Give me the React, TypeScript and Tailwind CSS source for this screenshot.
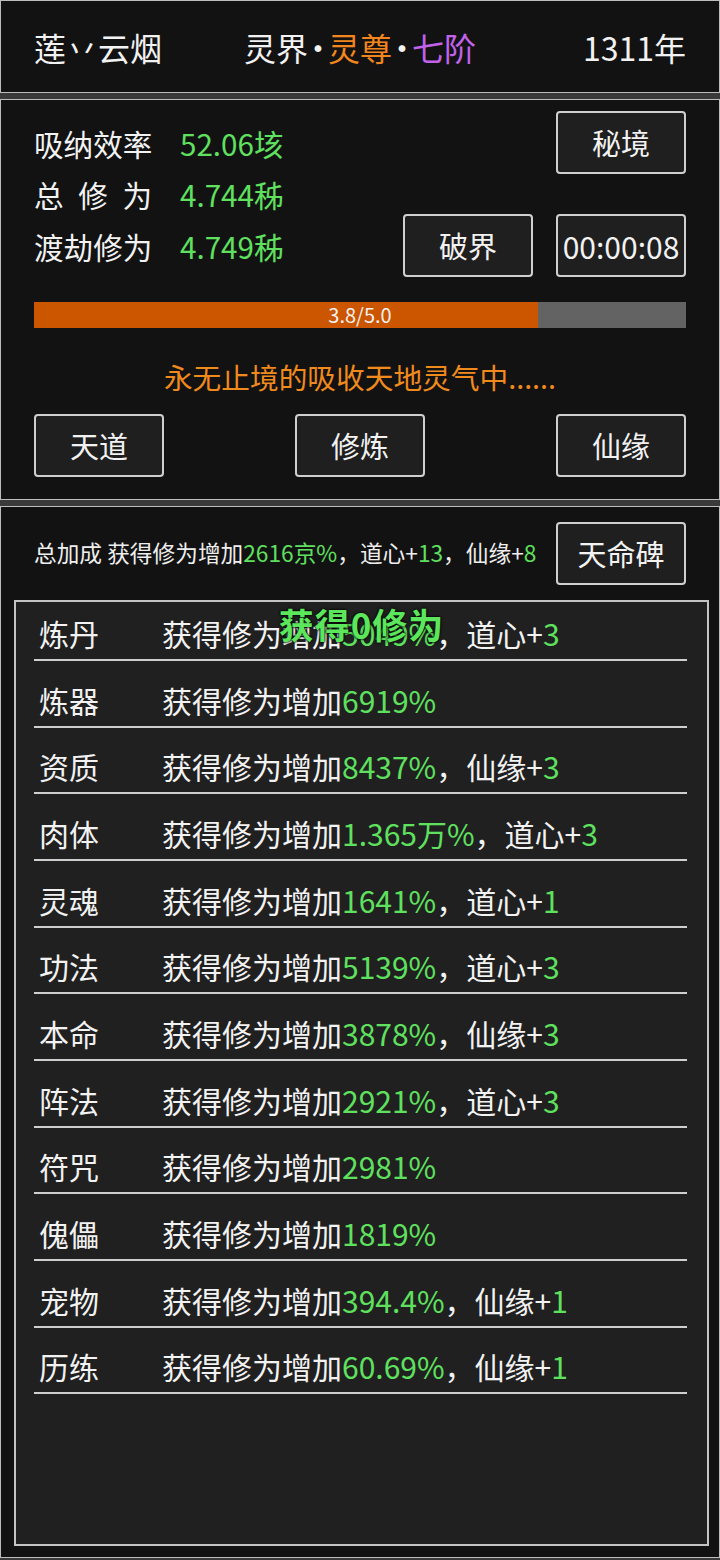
import React from 'react';

// 属性加成列表
interface BonusRow {
    name: string;
    gain: string;
    extraLabel?: string;
    extraValue?: string;
}

const rows: BonusRow[] = [
    { name: '炼丹', gain: '5049%', extraLabel: '道心+', extraValue: '3' },
    { name: '炼器', gain: '6919%' },
    { name: '资质', gain: '8437%', extraLabel: '仙缘+', extraValue: '3' },
    { name: '肉体', gain: '1.365万%', extraLabel: '道心+', extraValue: '3' },
    { name: '灵魂', gain: '1641%', extraLabel: '道心+', extraValue: '1' },
    { name: '功法', gain: '5139%', extraLabel: '道心+', extraValue: '3' },
    { name: '本命', gain: '3878%', extraLabel: '仙缘+', extraValue: '3' },
    { name: '阵法', gain: '2921%', extraLabel: '道心+', extraValue: '3' },
    { name: '符咒', gain: '2981%' },
    { name: '傀儡', gain: '1819%' },
    { name: '宠物', gain: '394.4%', extraLabel: '仙缘+', extraValue: '1' },
    { name: '历练', gain: '60.69%', extraLabel: '仙缘+', extraValue: '1' },
];

const progress = { current: 3.8, max: 5.0 };

const GameButton = ({ children, className = '' }: { children: React.ReactNode; className?: string }) => (
    <button
        className={`flex h-[63px] w-[130px] shrink-0 items-center justify-center rounded-[4px] border-2 border-[#cfcfcf] bg-[#1f1f1f] text-[29px] leading-none text-[#f2f2f2] ${className}`}
    >
        {children}
    </button>
);

const StatRow = ({ label, value }: { label: React.ReactNode; value: string }) => (
    <div className="flex h-[51.5px] items-center">
        <div className="w-[146px] text-[29.6px] text-[#f2f2f2]">{label}</div>
        <div className="text-[29.6px] text-[#5fe05f]">{value}</div>
    </div>
);

const Dot = () => <span className="inline-flex w-[20px] justify-center">·</span>;

export default function App() {
    return (
        <div className="flex h-[1560px] w-[720px] flex-col bg-[#3a3a3a] font-['Noto_Sans_CJK_SC','Noto_Sans',sans-serif]">
            {/* Header */}
            <div className="grid h-[93px] shrink-0 grid-cols-[1fr_auto_1fr] items-center border border-[#bdbdbd] bg-[#121212] px-[33px] text-[32px] text-[#f2f2f2]">
                <span>莲丷云烟</span>
                <span className="flex items-center">
                    灵界<Dot />
                    <span className="text-[#f2861e]">灵尊</span>
                    <Dot />
                    <span className="text-[#c262ea]">七阶</span>
                </span>
                <span className="justify-self-end">1311年</span>
            </div>

            {/* Stats */}
            <div className="mt-[6px] h-[401px] shrink-0 border border-[#bdbdbd] bg-[#121212] px-[33px]">
                <div className="flex items-start justify-between">
                    <div className="flex flex-col pt-[18px]">
                        <StatRow label="吸纳效率" value="52.06垓" />
                        <StatRow
                            label={
                                <span className="flex w-[118px] justify-between">
                                    <span>总</span>
                                    <span>修</span>
                                    <span>为</span>
                                </span>
                            }
                            value="4.744秭"
                        />
                        <StatRow label="渡劫修为" value="4.749秭" />
                    </div>
                    <div className="flex flex-col items-end gap-[40px] pt-[11px]">
                        <GameButton>秘境</GameButton>
                        <div className="flex gap-[23px]">
                            <GameButton>破界</GameButton>
                            <GameButton className="text-[30px]">00:00:08</GameButton>
                        </div>
                    </div>
                </div>

                {/* Progress bar */}
                <div className="relative mt-[25px] h-[26px] bg-[#636363]">
                    <div className="h-full bg-[#cc5500]" style={{ width: '77.3%' }} />
                    <div className="absolute inset-0 flex items-center justify-center text-[20px] leading-none text-[#f2f2f2]">
                        {progress.current.toFixed(1)}/{progress.max.toFixed(1)}
                    </div>
                </div>

                <div className="mt-[29px] h-[40px] text-center text-[28.7px] leading-[40px] text-[#f08a1c]">
                    永无止境的吸收天地灵气中......
                </div>

                <div className="mt-[17px] flex justify-between">
                    <GameButton>天道</GameButton>
                    <GameButton>修炼</GameButton>
                    <GameButton>仙缘</GameButton>
                </div>
            </div>

            {/* Bonus list */}
            <div className="mt-[6px] flex h-[1052px] shrink-0 flex-col border border-[#bdbdbd] bg-[#121212]">
                <div className="flex items-center justify-between px-[33px] pt-[15px]">
                    <div className="text-[22.7px] text-[#eeeeee]">
                        总加成 获得修为增加<span className="text-[#5fe05f]">2616京%</span>，道心+
                        <span className="text-[#5fe05f]">13</span>，仙缘+<span className="text-[#5fe05f]">8</span>
                    </div>
                    <GameButton>天命碑</GameButton>
                </div>

                <div className="relative mb-[11px] ml-[13px] mr-[10px] mt-[15px] flex-1 border-2 border-[#c4c4c4] bg-[#202020] pl-[18px] pr-[20px]">
                    {rows.map(row => (
                        <div
                            key={row.name}
                            className="mb-[7.67px] flex h-[59px] items-center border-b-2 border-[#cfcfcf] pl-[5px] pt-[6px] text-[30px] text-[#f2f2f2]"
                        >
                            <span className="w-[123px]">{row.name}</span>
                            <span>
                                获得修为增加<span className="text-[#5fe05f]">{row.gain}</span>
                                {row.extraLabel && (
                                    <>
                                        ，{row.extraLabel}
                                        <span className="text-[#5fe05f]">{row.extraValue}</span>
                                    </>
                                )}
                            </span>
                        </div>
                    ))}

                    {/* Floating gain toast */}
                    <div className="absolute left-0 right-0 top-0 text-center text-[35px] font-bold leading-[44px] tracking-[1px] text-[#5ce65c] [text-shadow:0_0_3px_#000,0_0_2px_#000]">
                        获得0修为
                    </div>
                </div>
            </div>
        </div>
    );
}
